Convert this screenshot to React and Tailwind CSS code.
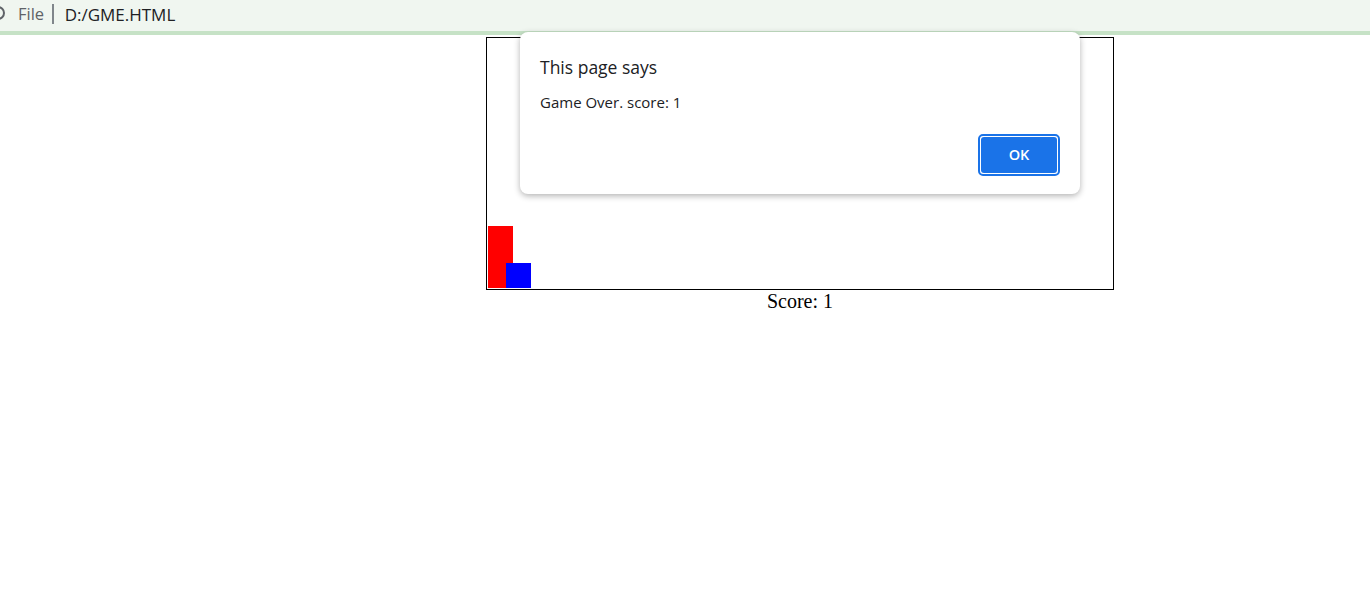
import React from "react";

function TopBar() {
  return (
    <div className="h-[35px] bg-[#f0f6f0] border-b-[4px] border-[#c6e2c6] flex items-center pb-[3px] relative overflow-hidden">
      {/* icono cortado a la izquierda */}
      <div className="absolute left-[-9px] top-[6px] w-[14px] h-[14px] rounded-full border-[2px] border-[#5f6368]"></div>
      <span className="ml-[18px] text-[16.5px] text-[#5f6368] leading-none" style={{ fontFamily: '"Open Sans", sans-serif' }}>
        File
      </span>
      <span className="ml-[8px] w-[1.5px] h-[20px] bg-[#80868b]"></span>
      <span className="ml-[11px] text-[17px] text-[#202124] leading-none" style={{ fontFamily: '"Open Sans", sans-serif' }}>
        D:/GME.HTML
      </span>
    </div>
  );
}

function Alerta() {
  return (
    <div
      className="absolute left-[520px] top-[32px] w-[560px] h-[162px] bg-white rounded-[8px] shadow-[0_2px_6px_rgba(0,0,0,0.3)] px-[20px] pt-[20px] font-['Open_Sans',sans-serif]"
    >
      <div className="text-[17.5px] text-[#202124] leading-[30px]">This page says</div>
      <div className="mt-[10px] text-[15px] text-[#202124] leading-[20px]">Game Over. score: 1</div>
      <div className="flex justify-end mt-[22px]">
        <button className="w-[82px] h-[42px] rounded-[5px] border-[2px] border-[#1a73e8] p-[1px] bg-white">
          <div className="w-full h-full rounded-[3px] bg-[#1a73e8] text-white text-[14.5px] font-semibold flex items-center justify-center">
            OK
          </div>
        </button>
      </div>
    </div>
  );
}

function App() {
  return (
    <div className="w-[1370px] h-[590px] bg-white relative overflow-hidden">
      <TopBar />
      <div className="pl-[486px] pt-[2px]">
        <div className="w-[628px] flex flex-col items-center">
          <div className="w-[628px] h-[253px] border border-black relative">
            <div className="absolute left-[1px] top-[188px] w-[25px] h-[62px] bg-[#ff0000]"></div>
            <div className="absolute left-[19px] top-[225px] w-[25px] h-[25px] bg-[#0000ff]"></div>
          </div>
          <div className="text-[20px] leading-[23px] text-black" style={{ fontFamily: '"Liberation Serif", serif' }}>
            Score: 1
          </div>
        </div>
      </div>
      <Alerta />
    </div>
  );
}

export default App;
